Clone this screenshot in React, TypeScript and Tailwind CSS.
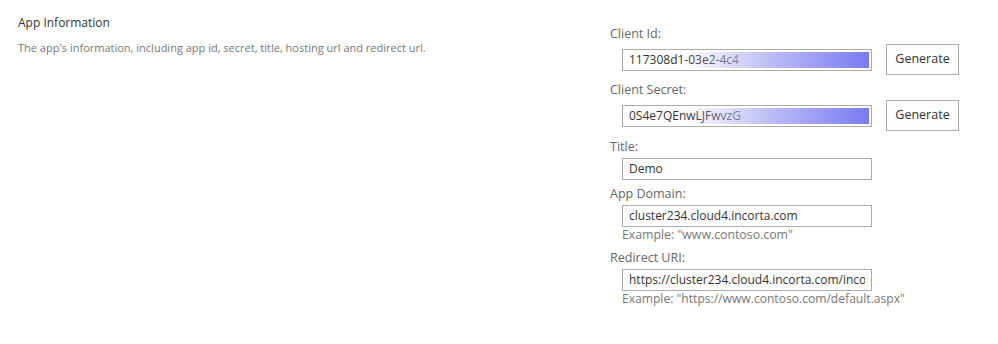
const font = { fontFamily: '"Open Sans", "Noto Sans", sans-serif' };

const Label = ({ children, className = '' }: { children: React.ReactNode; className?: string }) => (
  <div className={`text-[12.5px] leading-[16px] text-[#666] ${className}`}>{children}</div>
);

const TextBox = ({ value, masked = false }: { value: string; masked?: boolean }) => (
  <div className="relative w-[250px] h-[22px] border border-[#ababab] bg-white overflow-hidden">
    <input
      readOnly
      value={value}
      className="block w-full h-[20px] px-[6px] py-0 text-[12px] leading-[20px] text-[#333] bg-transparent outline-none"
      style={font}
    />
    {masked && (
      <div className="absolute inset-y-[2px] left-[60px] right-[2px] bg-gradient-to-r from-[#ffffff00] via-[#b8b8f6] to-[#7a7af2]" />
    )}
  </div>
);

const GenerateButton = () => (
  <button className="ml-[14px] w-[73px] h-[31px] border border-[#ababab] bg-[#fdfdfd] text-[12.5px] text-[#333]">
    Generate
  </button>
);

export default function App() {
  return (
    <div className="w-[998px] h-[344px] bg-white flex" style={font}>
      <div className="w-[610px] pl-[18px] pt-[15px]">
        <h2 className="text-[12px] leading-[16px] text-[#333]">App Information</h2>
        <p className="mt-[10px] text-[11px] leading-[14px] text-[#777]">
          The app's information, including app id, secret, title, hosting url and redirect url.
        </p>
      </div>
      <div className="flex flex-col pt-[26px]">
        <Label>Client Id:</Label>
        <div className="mt-[2px] ml-[12px] flex items-center">
          <TextBox value="117308d1-03e2-4c4" masked />
          <GenerateButton />
        </div>
        <Label className="mt-[7px]">Client Secret:</Label>
        <div className="mt-[2px] ml-[12px] flex items-center">
          <TextBox value="0S4e7QEnwLJFwvzG" masked />
          <GenerateButton />
        </div>
        <Label className="mt-[8px]">Title:</Label>
        <div className="mt-[3px] ml-[12px]">
          <TextBox value="Demo" />
        </div>
        <Label className="mt-[6px]">App Domain:</Label>
        <div className="mt-[3px] ml-[12px]">
          <TextBox value="cluster234.cloud4.incorta.com" />
        </div>
        <div className="ml-[12px] text-[12.3px] leading-[16px] text-[#777]">Example: "www.contoso.com"</div>
        <Label className="mt-[7px]">Redirect URI:</Label>
        <div className="mt-[3px] ml-[12px]">
          <TextBox value="https://cluster234.cloud4.incorta.com/incorta" />
        </div>
        <div className="ml-[12px] text-[12.1px] leading-[16px] text-[#777]">
          Example: "https://www.contoso.com/default.aspx"
        </div>
      </div>
    </div>
  );
}
